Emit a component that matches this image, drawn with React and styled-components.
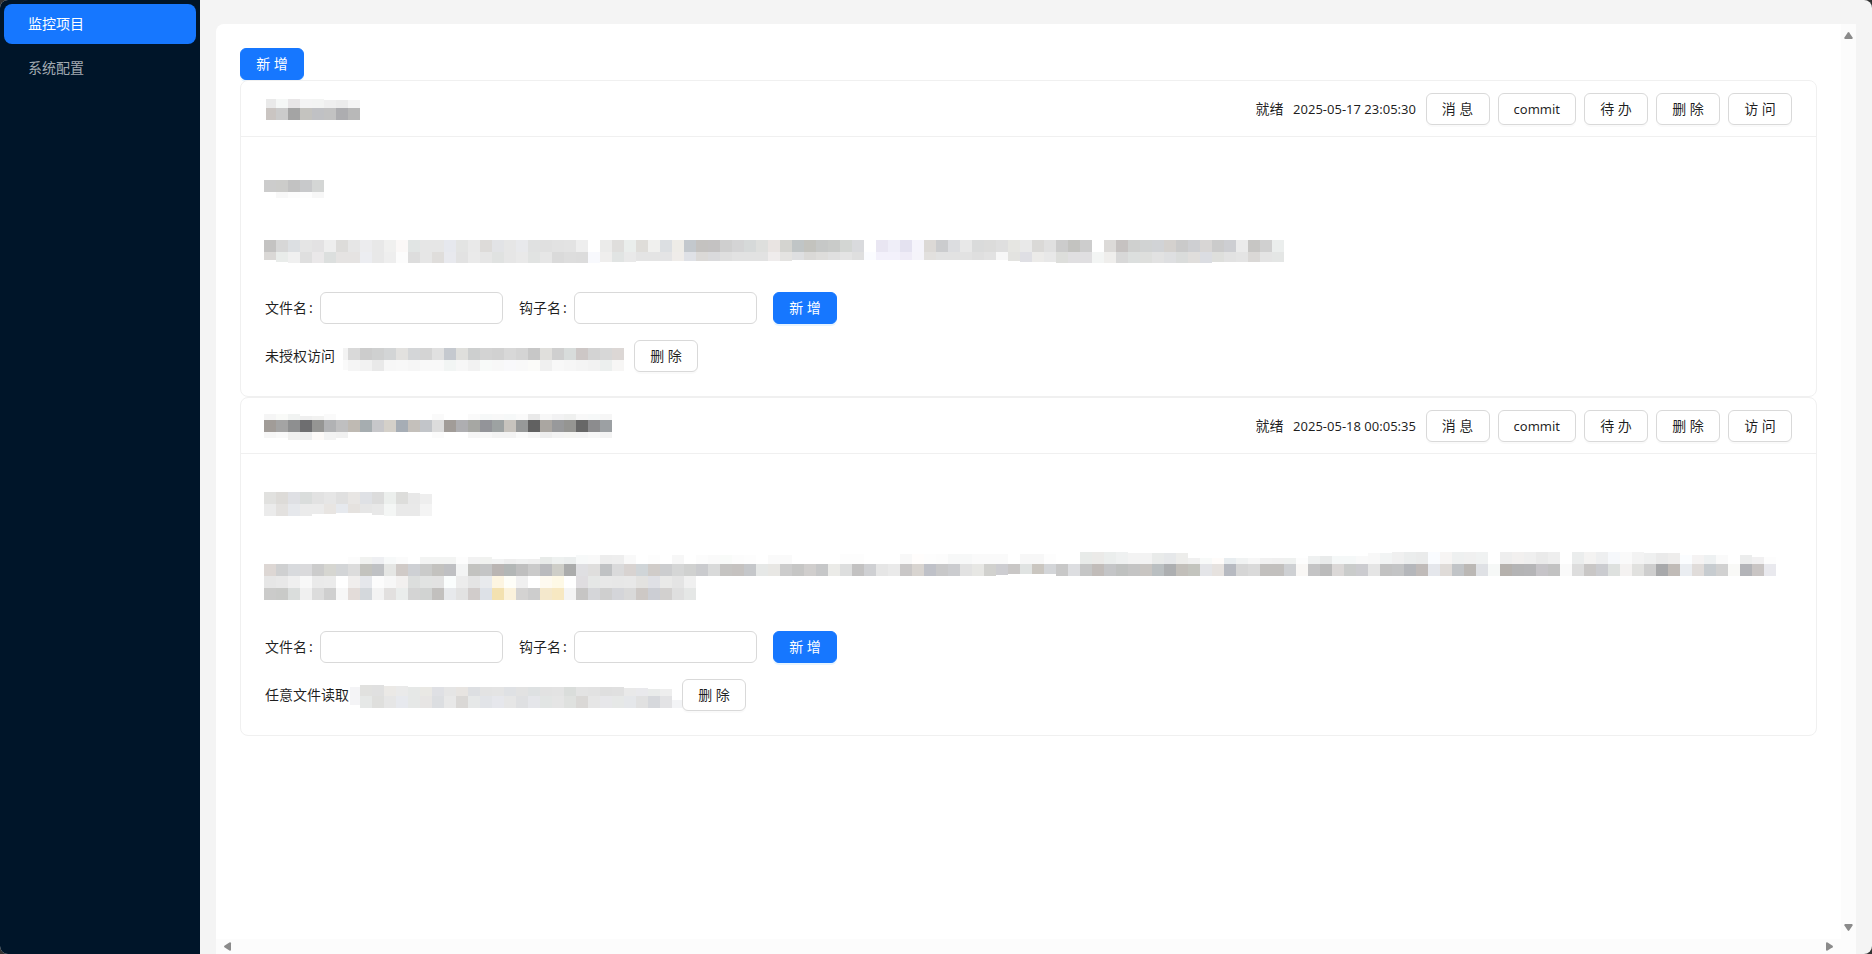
import React from 'react'
import styled, { createGlobalStyle } from 'styled-components'

const CELL = 12

const menuItems = [
  { key: 'projects', label: '监控项目', active: true },
  { key: 'config', label: '系统配置', active: false },
]

// two digits are a grey, six a full colour, "-" an empty cell
const projects = [
  {
    id: 1,
    status: '就绪',
    time: '2025-05-17 23:05:30',
    title: {
      label: '项目一',
      width: 96,
      height: 24,
      rows: [
        { x: 2, y: 2, w: 10, h: 9, cells: 'e9' },
        { x: 12, y: 2, h: 9, cells: 'f5f7f6 e8e6e7 f4 f3f4f3' },
        { x: 60, y: 3, h: 8, cells: 'ef ec f5' },
        { x: 2, y: 11, w: 10, h: 12, cells: 'cac5c2' },
        { x: 12, y: 11, h: 12, cells: 'cb a4 c4c3bf c0c1c4 c2 adadb0 b8' },
      ],
    },
    name: {
      label: '项目名称',
      width: 60,
      height: 24,
      rows: [
        { x: 0, y: 6, h: 12, cells: 'cc ccccca c2 c8c9cb d4d6d5' },
        { x: 12, y: 18, h: 6, cells: 'f8 fc fd f7' },
      ],
    },
    desc: {
      label: '项目描述',
      width: 1020,
      height: 24,
      rows: [
        { x: 0, y: 0, h: 12, cells: 'c4c3c2 d7 dcdfe2 e5 e3e2e3 ee dddcda e6 ececee e8 f0f0ef fbf8f7 e1e5e4 e6 e6 e6e8ee e3e4e3 e9 dddbd9 e2e3e6 e6 e8e9ec e0e1e1 e0 e2 e3 ee - ebebea dfdedc eaeeec dfddd9 f0f0ee dcdfe2 eeece7 c3c8cd c4c2c0 c4c2c2 cf d4d4d5 d6d9d9 dedfdd e9e4e2 d4d4d0 c0c5c6 c3c3be c6c8c7 c9cbc9 d3d6d3 d9dadd - e9e6f2 efeef8 e4e2f0 f5f4fb dcd9d6 cbccce dcdde0 e8 dadbdb dcdcdb df e6e6e2 e9 dad9d7 e0 cc c3c3c0 cd - dcdad8 c6c2c1 cfd0cf d1d3d3 d1d3d6 d4d1ce ca cecfd2 d8d6d5 cb cdced2 eb c7c6c4 d0 ebeeed' },
        { x: 0, y: 12, h: 8, cells: 'dad8d6' },
        { x: 12, y: 12, h: 10, cells: 'e9ecea' },
        { x: 24, y: 12, h: 11, cells: 'f0 df eae8e9 dcdfde e5e3e2 e5e3e2 ecedf1 e8 ee fc dd e6 dfdddb e8e9ee e2 ea e6 e0e2e1 e6 e9 e1e3e2 e6 da dd dc f8f9fd' },
        { x: 336, y: 12, h: 10, cells: 'efeeed e1e4e3 e9' },
        { x: 372, y: 12, h: 9, cells: 'e4 e4 e4e4e5 efece9 dfe1e6 dbd9d7 dadadc df e2 e2 e2 efecec e4e3e1' },
        { x: 528, y: 12, h: 8, cells: 'dedfe1 dad9d7 dedddb e0 e4 df fbfcff f3f1fb f3f1fb efecf7 f5f4fa e2e0de e2 e2 e2 df e2 f7' },
        { x: 744, y: 12, h: 9, cells: 'e3e3e0' },
        { x: 756, y: 12, h: 10, cells: 'dfdfe4 ecebe9 e8' },
        { x: 792, y: 12, h: 11, cells: 'dddedb e0dfe1 e0dfe1 f3f5f4 efeeec d8 dcdfde dedfdd e2 dedfe1 dadcdb e0dedc dbdde2' },
        { x: 948, y: 12, h: 10, cells: 'dedfdc e2 e4 dad8d6 e4 e4e6e5' },
      ],
    },
    hooks: [
      {
        id: 11,
        name: '未授权访问',
        mask: {
          label: '访问地址',
          width: 283,
          height: 32,
          rows: [
            { x: 1, y: 8, w: 5, h: 12, cells: 'f3' },
            { x: 6, y: 8, h: 12, cells: 'd9 cc cfd0d0 d3d5d6 e2e1df d4d6d8 d4 e0 c5c9cf dfdfdc cdcfcf d3 d1 d8 d4 c7 e0dfdc cf d8dcdb cdc7c6 d3 d7 dcd7d5' },
            { x: 1, y: 20, w: 5, h: 10, cells: 'fa' },
            { x: 6, y: 20, h: 11, cells: 'f5 f2 e9 f7 f8 f6 f9 f9 f2f5f4 f7 f2 f8faf9 f8 f9f9fb f9 fbfbf9 f0 f8 f6 f4 f2 ecefee f7f6f5' },
          ],
        },
      },
    ],
  },
  {
    id: 2,
    status: '就绪',
    time: '2025-05-18 00:05:35',
    title: {
      label: '项目二',
      width: 348,
      height: 24,
      rows: [
        { x: 0, y: 0, h: 6, cells: 'f5 f9faf8 f1f3f2 - - fa - - - - - - - - fa - - fa f6f8f8 f8 f6f8f8 fa e9 f7 f2f2f3 eff0ef f8 f6f8f8 f6' },
        { x: 36, y: 2, h: 4, cells: 'ef f2f2f1' },
        { x: 0, y: 6, h: 12, cells: 'a19c98 a4 8e8f90 6e6e70 959593 b1b2b4 bfbfc0 bfbab3 a6adb0 c7c7ca d4d0c9 a6adb5 c4c0bb c2c5c9 dc a19c98 aeaeb1 a6a7a3 939499 9da2a2 c7c3bd 979999 61 aaa6a1 98999b 959592 67 8c8c8e 9ca0a3' },
        { x: 0, y: 18, h: 6, cells: 'f6 f9 - - - - f1 - - - - - - - fb - - f6 f7 f3 f3 fa f5 ee f3 f4f4f2 f4 f7 f3' },
        { x: 24, y: 18, h: 8, cells: 'f0f0ef ee fdfaf8 f3' },
      ],
    },
    name: {
      label: '项目名称',
      width: 168,
      height: 24,
      rows: [
        { x: 0, y: 1, h: 12, cells: 'e1e1df dddbd8 dfe0e4 dadddc e2 e6 e0 e8e6e4 dfe1e5 dc ecefed dddddb' },
        { x: 144, y: 2, h: 11, cells: 'e8' },
        { x: 156, y: 3, h: 10, cells: 'ee' },
        { x: 0, y: 13, h: 12, cells: 'eb e3e1df e6e8ec eb' },
        { x: 48, y: 13, h: 10, cells: 'eb e8e5e2' },
        { x: 72, y: 13, h: 9, cells: 'e6e9ee e5e2df e6' },
        { x: 108, y: 13, h: 11, cells: 'e8' },
        { x: 120, y: 13, h: 12, cells: 'f4f6f5 e9 e9 f4' },
      ],
    },
    desc: {
      label: '项目描述',
      width: 1512,
      height: 46,
      rows: [
        { x: 84, y: 0, h: 7, cells: 'fc f1f2f0 eeeff2 f7f9f9 fb - f3f4f3 f3f4f3 f3f4f3 fd f2 f1f2f0' },
        { x: 228, y: 2, h: 5, cells: 'f2f3f3 ee f0f1f1 ef' },
        { x: 276, y: 0, h: 7, cells: 'e8ebe9 eef1f0 ebeeee' },
        { x: 312, y: -2, h: 9, cells: 'f7f9f9 f9 ed ee f9 - fd - f7 - fc fa f9fbf9 fc fd - fa fa' },
        { x: 576, y: -3, h: 10, cells: 'fd fd - - - f8 fffdfc fd fc f7f8f8 f7f8f8 fa fa fa - f7 f7 fd - - fc' },
        { x: 816, y: -5, h: 12, cells: 'e8ebe9 ebeae8 ebeeed eff1f1' },
        { x: 864, y: -4, h: 11, cells: 'f3 f3 e9ebea e6e8ea ededeb' },
        { x: 924, y: 1, h: 6, cells: 'f0 f8faf9 fffcfa e8edf0 f1f3f3 f7 f1 f0 eff1f0 fd' },
        { x: 1044, y: -1, h: 8, cells: 'eff1f1 e9ebeb f5f8f8 f5f8f8 f9' },
        { x: 1104, y: -4, h: 11, cells: 'f8 f2f4f4' },
        { x: 1128, y: -5, h: 12, cells: 'f0 ebeded eaebeb fafcff f7f5f4 eef0f0 f0 f0f2f2 - ee f2f0ef ef ea ee - ebeded f4f3f2 eeeff0 f6f8fb fa f3' },
        { x: 1380, y: -4, h: 11, cells: 'eff0f0 ea eeedec' },
        { x: 1416, y: -2, h: 9, cells: 'fbfdff f5f3f3 eef1f2 fa - eceded' },
        { x: 1488, y: 0, h: 7, cells: 'f1f0f1 fd' },
        { x: 0, y: 7, h: 12, cells: 'ddd7d4 cfd0d1 d8dadd dadadc cc d6d6d1 d3d5d7 dc c3c3be bfc1c4 e5e6e4 d0cac7 ced0d4 cacbca c3c2bf bfc0c3 f3f4f4 c3c3c0 c4c5c6 bab5b3 b3b7b6 bf ca babbbe cecec8 abacac dfdfe2 dfdedd c0c2c4 dadadb d8d3d1 d0d5d8 d0ccc9 cccdcf d5d6d6 d0d1d0 cacbce d9dada c5c4c2 c5c2c0 c5c7ca e6e8e7 e8e7e4 cc c6c6c5 d0cecd c6c7c8 ebebe8 dddede c3c2c2 cfd0d3 e6 ea c9c7c7 d8d4d0 bfc1c8 c8c8c9 cbcccf e2 e7e7e4 d1d1ce' },
        { x: 732, y: 7, h: 11, cells: 'cdcdd1' },
        { x: 744, y: 7, h: 10, cells: 'c9c7c6 e0e3e2 cac6c0 d3d5d8' },
        { x: 792, y: 7, h: 12, cells: 'c8 dddee1 c5c6c6 c1bcb9 c4c5c7 bfc1c0 c4 c8c5c2 babfc1 adafb1 c2bfba c3c4be e4e5e8 e6e2df b7bac1 d6 da c2c0be c2c0be ced0d3 f9f7f5 c4c4c5 bb dbd8d7 cacccb ccccd0 e5 c2 c3c4c5 b5b7bb c0bbb9 e5e7ec dfdbd8 c1c4c7 bbb8b5 dfe1e5 f6f8f7 b5b1ad b4b4b5 b5b5b7 c6c4c8 c2 fa dd c9c7c6 cbccd0 dee1df f4f2f1 e1e1df ce a8a9ab c0bbb7 eaedf1 e0dcda c7ccd0 d1 f9f9f7 b3b4b8 c9c5c4 e9e9ee' },
        { x: 0, y: 19, h: 12, cells: 'e6 e8 ef f8 ea eb - f0eeed e5e7eb fc f7 f2f0ef dcdedd e1e3e2 e2 fafdfd ec e4 e8eaed fdf5e1 fefef8 f0 - fefaf0 fef9e6 - dfdde0 e5e7e6 e8 e7 e8 e3e2e0 dfe0e5 e9e9e8 e4 f0' },
        { x: 0, y: 31, h: 12, cells: 'cbcbca c9cac8 dadddc f0 dc cf f7 e3dcd9 d4d8dc f3 e2e0df eaedec d4 d1d3d2 c2c0be e7e9ec e2 d1cccb dde1e7 f3e1b0 fbf2dc d4d3d2 cd f4e8cc f7e8c2 f4 c6c5c4 d5d6d9 cf d4d5d9 d9 cdc8c5 ccced4 d2d0cf df e5e7e6' },
      ],
    },
    hooks: [
      {
        id: 21,
        name: '任意文件读取',
        mask: {
          label: '读取地址',
          width: 317,
          height: 32,
          rows: [
            { x: -6, y: 8, w: 10, h: 18, cells: 'f4f4f6' },
            { x: 4, y: 6, h: 11, cells: 'e1e1df e0' },
            { x: 28, y: 7, h: 10, cells: 'ebe9e6 ea' },
            { x: 52, y: 8, h: 9, cells: 'e6e8e7 e9e8e4 dfe0e4 e5 e7e4e1 dddfe2 e3 e4 dfe1e4 e2 dee1e2 e2 e3 dadddb e3 e2 df e0' },
            { x: 268, y: 9, h: 8, cells: 'e9 e9e9ec' },
            { x: 292, y: 10, h: 7, cells: 'e9ebea ee' },
            { x: 4, y: 17, h: 12, cells: 'e6e8e7 dfdfdd e6 e7e9ee e6e8e7 e7e5e4 dcdee1 e8 dad8d6 e6e8e8 e2e4e8 e6e7ec e6 dfe0e2 e5e6ea e2e5e4 e5 dfe1df dad8d6 e6 e7e7ea e6e8e7 e5e7ea e1 d6d8dc e3e3e5' },
            { x: 316, y: 21, w: 10, h: 8, cells: 'f3f4f6' },
          ],
        },
      },
    ],
  },
]

const toColor = (cell) => (cell.length === 2 ? `#${cell}${cell}${cell}` : `#${cell}`)

function Mosaic({ label, width, height, rows }) {
  return (
    <MosaicSvg
      width={width}
      height={height}
      viewBox={`1 0 ${width} ${height}`}
      role="img"
      aria-label={label}
      shapeRendering="crispEdges"
    >
      {rows.map((row, r) =>
        row.cells.split(' ').map((cell, i) =>
          cell === '-' ? null : (
            <rect
              key={`${r}-${i}`}
              x={row.x + i * CELL}
              y={row.y}
              width={row.w || CELL}
              height={row.h}
              fill={toColor(cell)}
            />
          )
        )
      )}
    </MosaicSvg>
  )
}

function Arrow({ turn }) {
  return (
    <svg width="9" height="9" viewBox="0 0 9 9" aria-hidden="true">
      <path
        d="M3.8 1.4Q4.5.6 5.2 1.4L8.6 6.4Q9 8 7.8 8H1.2Q0 8 .4 6.4Z"
        fill="#8b8b8b"
        transform={`rotate(${turn} 4.5 4.5)`}
      />
    </svg>
  )
}

function ProjectCard({ project }) {
  const fileId = `file-${project.id}`
  const hookId = `hook-${project.id}`

  return (
    <Card>
      <CardHead>
        <Mosaic {...project.title} />
        <Actions>
          <span>{project.status}</span>
          <Time>{project.time}</Time>
          <Button type="button">消 息</Button>
          <Button type="button" $latin>commit</Button>
          <Button type="button">待 办</Button>
          <Button type="button">删 除</Button>
          <Button type="button">访 问</Button>
        </Actions>
      </CardHead>
      <CardBody>
        <Name><Mosaic {...project.name} /></Name>
        <Description><Mosaic {...project.desc} /></Description>
        <HookForm onSubmit={(e) => e.preventDefault()}>
          <Field>
            <Label htmlFor={fileId}>文件名<Colon>:</Colon></Label>
            <Input id={fileId} type="text" />
          </Field>
          <Field>
            <Label htmlFor={hookId}>钩子名<Colon>:</Colon></Label>
            <Input id={hookId} type="text" />
          </Field>
          <Button type="submit" $primary>新 增</Button>
        </HookForm>
        {project.hooks.map((hook) => (
          <HookRow key={hook.id}>
            <span>{hook.name}</span>
            <Mosaic {...hook.mask} />
            <Button type="button">删 除</Button>
          </HookRow>
        ))}
      </CardBody>
    </Card>
  )
}

function App() {
  return (
    <>
      <GlobalStyle />
      <Layout>
        <Sider>
          {menuItems.map((item) => (
            <MenuItem key={item.key} href={`#${item.key}`} $active={item.active}>
              {item.label}
            </MenuItem>
          ))}
        </Sider>
        <Main>
          <Panel>
            <Content>
              <Button type="button" $primary>新 增</Button>
              {projects.map((project) => (
                <ProjectCard key={project.id} project={project} />
              ))}
            </Content>
            <ScrollBar $vertical>
              <Arrow turn={0} />
              <Arrow turn={180} />
            </ScrollBar>
            <ScrollBar>
              <Arrow turn={270} />
              <Arrow turn={90} />
            </ScrollBar>
            <ScrollCorner />
          </Panel>
        </Main>
      </Layout>
    </>
  )
}

export default App

const GlobalStyle = createGlobalStyle`
* {
  box-sizing: border-box;
}
body {
  margin: 0;
  background: #333;
  color: rgba(0, 0, 0, 0.88);
  font-family: "Noto Sans", "Noto Sans CJK SC", sans-serif;
  font-size: 14px;
  line-height: 22px;
}
`

const Layout = styled.div`
  display: flex;
  height: 100vh;
  border-radius: 8px;
  overflow: hidden;
  background: #f4f4f4;
`

const Sider = styled.nav`
  flex: 0 0 200px;
  display: flex;
  flex-direction: column;
  gap: 4px;
  padding: 4px;
  background: #001529;
`

const MenuItem = styled.a`
  height: 40px;
  padding: 0 24px;
  border-radius: 8px;
  line-height: 40px;
  text-decoration: none;
  color: ${(p) => (p.$active ? '#fff' : 'rgba(255, 255, 255, 0.65)')};
  background: ${(p) => (p.$active ? '#1677ff' : 'transparent')};
`

const Main = styled.main`
  flex: 1;
  min-width: 0;
  display: flex;
  padding: 24px 16px 0;
`

const Panel = styled.div`
  flex: 1;
  min-width: 0;
  display: grid;
  grid-template-columns: minmax(0, 1fr) 15px;
  grid-template-rows: minmax(0, 1fr) 15px;
  border-radius: 8px 0 0 0;
  overflow: hidden;
  background: #fff;
`

const Content = styled.div`
  padding: 24px;
  overflow: hidden;
`

const ScrollBar = styled.div`
  display: flex;
  flex-direction: ${(p) => (p.$vertical ? 'column' : 'row')};
  align-items: center;
  justify-content: space-between;
  padding: ${(p) => (p.$vertical ? '7px 0' : '0 7px')};
  background: #fcfcfc;
`

const ScrollCorner = styled.div`
  background: #fcfcfc;
`

const Button = styled.button`
  display: block;
  min-width: 64px;
  height: 32px;
  padding: 0 15px;
  border: 1px solid ${(p) => (p.$primary ? '#1677ff' : '#d9d9d9')};
  border-radius: 6px;
  background: ${(p) => (p.$primary ? '#1677ff' : '#fff')};
  color: ${(p) => (p.$primary ? '#fff' : 'rgba(0, 0, 0, 0.88)')};
  box-shadow: 0 2px 0 ${(p) => (p.$primary ? 'rgba(5, 145, 255, 0.1)' : 'rgba(0, 0, 0, 0.02)')};
  font: inherit;
  font-size: ${(p) => (p.$latin ? '13px' : '14px')};
  white-space: nowrap;
  cursor: pointer;
`

const Card = styled.section`
  border: 1px solid #f0f0f0;
  border-radius: 8px;
  background: #fff;
`

const CardHead = styled.header`
  display: flex;
  align-items: center;
  justify-content: space-between;
  height: 56px;
  padding: 0 24px;
  border-bottom: 1px solid #f0f0f0;
`

const Actions = styled.div`
  display: flex;
  align-items: center;
  gap: 8px;
`

const Time = styled.time`
  min-width: 126px;
  font-size: 13px;
  text-align: center;
  white-space: nowrap;
`

const CardBody = styled.div`
  padding: 24px;
`

const Name = styled.div`
  padding: 13px 0 42px;
`

const Description = styled.div`
  padding-bottom: 28px;
`

const HookForm = styled.form`
  display: flex;
  align-items: center;
  gap: 16px;
  margin-bottom: 16px;
`

const Field = styled.div`
  display: flex;
  align-items: center;
`

const Label = styled.label`
  width: 55px;
`

const Colon = styled.span`
  margin-left: 2px;
`

const Input = styled.input`
  width: 183px;
  height: 32px;
  padding: 4px 11px;
  border: 1px solid #d9d9d9;
  border-radius: 6px;
  background: #fff;
  font: inherit;
  outline: none;
`

const HookRow = styled.div`
  display: flex;
  align-items: center;
  gap: 8px;
`

const MosaicSvg = styled.svg`
  display: block;
  flex: none;
  overflow: visible;
`
